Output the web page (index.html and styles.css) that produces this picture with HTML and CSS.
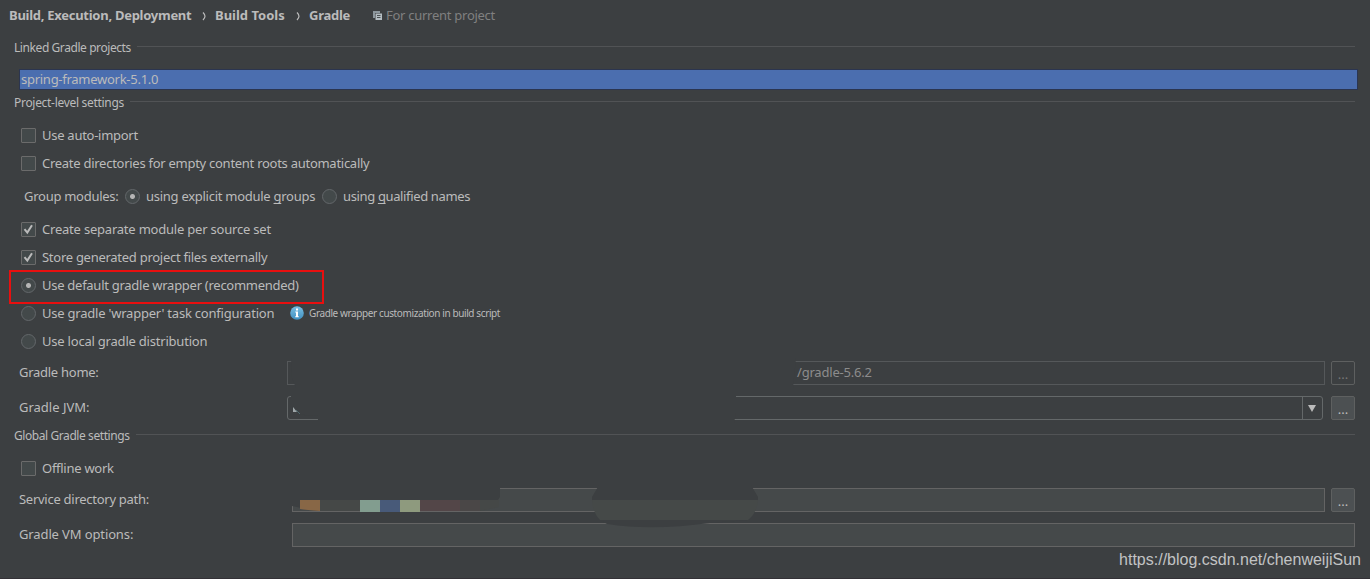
FILE: index.html
```
<!DOCTYPE html>
<html lang="en">
<head>
	<meta charset="UTF-8">
	<title>Settings - Gradle</title>
	<link rel="stylesheet" href="styles.css">
</head>
<body>
<div class="settings">
	<div class="breadcrumb">
		<span class="crumb crumb-first">Build, Execution, Deployment</span>
		<svg class="arrow" width="5" height="10" viewBox="0 0 5 10"><path d="M1 1.5Q3 3.5 3 5.2T1 9"/></svg>
		<span class="crumb crumb-tools">Build Tools</span>
		<svg class="arrow" width="5" height="10" viewBox="0 0 5 10"><path d="M1 1.5Q3 3.5 3 5.2T1 9"/></svg>
		<span class="crumb">Gradle</span>
		<svg class="project-icon" width="9" height="9" viewBox="0 0 9 9">
			<path d="M0 0h7v2H2v5H0z" fill="#8d979d"/>
			<path d="M2.5 2.5H9V9H2.5z" fill="#b4bdc2"/>
			<path d="M4 4.5h3.5M4 6.5h3.5" stroke="#4b5053"/>
		</svg>
		<span class="scope">For current project</span>
	</div>

	<div class="group-title linked"><span>Linked Gradle projects</span></div>
	<div class="project-list">
		<div class="project">spring-framework-5.1.0</div>
	</div>

	<div class="group-title level"><span>Project-level settings</span></div>
	<div class="row"><i class="check"></i><span>Use auto-import</span></div>
	<div class="row"><i class="check"></i><span>Create directories for empty content roots automatically</span></div>
	<div class="row modules">
		<span class="modules-label">Group modules:</span>
		<i class="radio on"></i><span class="opt-explicit">using explicit module <u>g</u>roups</span>
		<i class="radio"></i><span class="opt-qualified">using <u>q</u>ualified names</span>
	</div>
	<div class="row"><i class="check"><svg width="15" height="15" viewBox="0 0 15 15"><path d="M3.5 7.2L6.3 10.6 11 3.2"/></svg></i><span class="opt-separate">Create separate module per source set</span></div>
	<div class="row"><i class="check"><svg width="15" height="15" viewBox="0 0 15 15"><path d="M3.5 7.2L6.3 10.6 11 3.2"/></svg></i><span>Store generated project files externally</span></div>
	<div class="row marked"><i class="radio on"></i><span>Use default gradle wrapper (recommended)</span></div>
	<div class="row">
		<i class="radio"></i><span class="opt-task">Use gradle 'wrapper' task configuration</span>
		<svg class="info" width="14" height="14" viewBox="0 0 14 14">
			<defs><linearGradient id="ball" x2="0" y2="1"><stop offset="0" stop-color="#79bfe3"/><stop offset="1" stop-color="#3f8fc0"/></linearGradient></defs>
			<circle cx="7" cy="7" r="6.8" fill="url(#ball)"/>
			<path d="M6 2.6h2v1.9H6zM5.3 5.6H8v4.6h.8v1H5.2v-1H6V6.6h-.7z" fill="#fff"/>
		</svg>
		<span class="hint">Gradle wrapper customization in build script</span>
	</div>
	<div class="row"><i class="radio"></i><span class="opt-local">Use local gradle distribution</span></div>

	<div class="field-row home">
		<label>Gradle home:</label>
		<div class="field disabled"><span>/gradle-5.6.2</span></div>
		<div class="browse disabled">...</div>
		<svg class="smudge" width="520" height="30" viewBox="0 0 520 30"><path d="M4 0H509L506 30H9L5 20z"/></svg>
	</div>
	<div class="field-row jvm">
		<label>Gradle JVM:</label>
		<div class="combo"><div class="combo-button"><svg width="8" height="7" viewBox="0 0 8 7"><path d="M0 0h8L4 7z"/></svg></div></div>
		<div class="browse">...</div>
		<svg class="smudge" width="460" height="30" viewBox="0 0 460 30">
			<path d="M4 0H449V20L447 30H31V23L4 21z"/>
			<path class="cursor" d="M6 14l4 5H6z"/>
			<path class="tail" d="M9 17l4 4"/>
		</svg>
	</div>

	<div class="group-title global"><span>Global Gradle settings</span></div>
	<div class="row"><i class="check"></i><span>Offline work</span></div>
	<div class="field-row service">
		<label>Service directory path:</label>
		<div class="field"></div>
		<div class="browse">...</div>
		<svg class="smudge" width="480" height="48" viewBox="0 0 480 48">
			<path d="M0 0H208V12L206 15H30V26Q12 24 0 21z"/>
			<path d="M8 15h20v11Q14 25 8 24z" fill="#886746"/>
			<path d="M28 15H68V26H28zM188 15h19V22l-19 4z" fill="#454847"/>
			<path d="M68 15h20v12H68z" fill="#829d8f"/>
			<path d="M88 15h20v12H88z" fill="#485a79"/>
			<path d="M108 15h20v12h-20z" fill="#8e9a7e"/>
			<path d="M128 15h40v11h-40z" fill="#534648"/>
			<path d="M168 15h20v11h-20z" fill="#4a4747"/>
			<path d="M307 0H459L466 12V15H300V12z"/>
			<path d="M300 15H466Q465 28 456 35H308Q301 28 300 15z" fill="#454948"/>
			<path d="M308 35H456L418 38Q360 46 315 39z"/>
		</svg>
	</div>
	<div class="field-row vm">
		<label>Gradle VM options:</label>
		<div class="field"></div>
	</div>
	<div class="watermark">https://blog.csdn.net/chenweijiSun</div>
</div>
</body>
</html>
```
FILE: styles.css
```
* {
	box-sizing: border-box
}
body {
	margin: 0;
	background: #3c3f41;
	color: #bbb;
	font: 13px "Noto Sans", "Open Sans", sans-serif;
	letter-spacing: -0.27px
}
u {
	text-decoration-skip-ink: none;
	text-underline-offset: 2px
}
.settings {
	position: relative;
	height: 579px;
	overflow: hidden;
	border-bottom: 1px solid #333136
}
.breadcrumb {
	display: flex;
	align-items: center;
	height: 30px;
	padding-left: 9px;
	white-space: nowrap
}
.crumb {
	font-weight: bold;
	width: 41px
}
.crumb-first {
	width: 182px
}
.crumb-tools {
	width: 70px;
	letter-spacing: 0
}
.arrow {
	margin: 1px 8px 0 11px;
	fill: none;
	stroke: #bbb;
	stroke-width: 1.2
}
.project-icon {
	margin: 1px 4px 0 23px
}
.scope {
	color: #808080
}
.group-title {
	display: flex;
	align-items: center;
	height: 18px;
	padding: 0 15px 0 14px;
	font-size: 12px;
	letter-spacing: -0.42px
}
.group-title span {
	margin-top: -1px
}
.group-title:after {
	content: "";
	flex: 1;
	height: 1px;
	margin: -3px 0 0 6px;
	background: #515355
}
.linked {
	margin-top: 9px
}
.project-list {
	height: 21px;
	margin: 12px 12px 0 19px;
	border: 1px solid #2b3550
}
.project {
	height: 19px;
	padding-left: 1px;
	line-height: 19px;
	background: #4b6eaf
}
.level {
	margin: 4px 0 9px;
	letter-spacing: -0.3px
}
.row {
	position: relative;
	display: flex;
	height: 28px;
	padding: 7px 0 0 21px;
	line-height: 15px;
	white-space: nowrap
}
.check, .radio {
	flex: none;
	width: 15px;
	height: 15px;
	margin-right: 6px;
	background: #43494a;
	border: 1px solid #6b6b6b
}
.check svg {
	display: block;
	margin: -1px;
	fill: none;
	stroke: #bbb;
	stroke-width: 2
}
.check {
	border-radius: 1px
}
.radio {
	border-color: #63676a;
	border-radius: 50%
}
.on {
	background: radial-gradient(circle, #b5b5b5 2px, #43494a 3px)
}
.modules {
	margin: 5px 0;
	padding-left: 24px
}
.modules-label {
	width: 101px
}
.opt-explicit {
	width: 176px
}
.opt-qualified {
	letter-spacing: -0.36px
}
.opt-separate, .opt-local {
	letter-spacing: -0.21px
}
.marked:after {
	content: "";
	position: absolute;
	box-sizing: border-box;
	left: 9px;
	top: -1px;
	width: 315px;
	height: 34px;
	border: 2px solid #e80f0f;
	z-index: 1
}
.opt-task {
	width: 248px;
	letter-spacing: -0.22px
}
.info {
	margin-right: 5px
}
.hint {
	font-size: 10px;
	letter-spacing: -0.39px
}
.field-row {
	position: relative;
	display: flex;
	height: 24px;
	padding: 0 15px 0 19px;
	line-height: 22px
}
.field-row label {
	width: 268px
}
.field {
	flex: 1;
	background: #45494a;
	border: 1px solid #646464
}
.field.disabled {
	padding-left: 509px;
	color: #8c8c8c;
	line-height: 20px;
	letter-spacing: -0.2px;
	background: none;
	border-color: #55585a
}
.field span {
	position: relative;
	z-index: 1
}
.browse {
	width: 24px;
	margin-left: 6px;
	text-align: center;
	line-height: 25px;
	letter-spacing: 0;
	background: #4c5052;
	border: 1px solid #5e6060;
	border-radius: 2px
}
.browse.disabled {
	color: #777;
	background: none
}
.home {
	margin-top: 6px
}
.jvm {
	margin-top: 11px
}
.jvm label {
	letter-spacing: 0
}
.combo {
	display: flex;
	justify-content: flex-end;
	flex: 1;
	margin-right: 2px;
	border: 1px solid #646869;
	border-radius: 3px
}
.combo-button {
	width: 20px;
	padding: 8px 0 0 5px;
	border-left: 1px solid #646869
}
.combo-button svg {
	display: block;
	fill: #bbb
}
.smudge {
	position: absolute;
	left: 287px;
	top: -3px;
	fill: #3c3f41
}
.smudge .cursor {
	fill: #a0a8aa
}
.smudge .tail {
	stroke: #4d6a70
}
.global {
	margin: 7px 0 9px
}
.service {
	margin-top: 6px
}
.service label, .vm label {
	width: 273px
}
.vm label {
	letter-spacing: -0.12px
}
.service .smudge {
	left: 292px;
	z-index: 1
}
.vm {
	margin-top: 11px
}
.watermark {
	position: absolute;
	right: 9px;
	bottom: 9px;
	color: #c2c3c4;
	font: 16px "Liberation Sans", sans-serif;
	letter-spacing: 0
}
```
